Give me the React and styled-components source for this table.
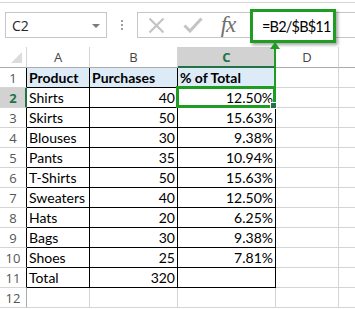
import React from "react";
import styled, { createGlobalStyle } from "styled-components";

const GREEN = "#1f9c22";
const SEL = "#217346";

const Global = createGlobalStyle`
  html, body { margin: 0; padding: 0; background: #fff; }
  body { width: 355px; height: 309px; overflow: hidden; font-family: Lato, "Open Sans", sans-serif; }
`;

const Page = styled.div`
  position: relative;
  width: 355px;
  height: 309px;
  overflow: hidden;
  background: #fff;
`;

const Toolbar = styled.div`
  height: 47px;
  box-sizing: border-box;
  border-top: 1px solid #fff;
  display: flex;
  align-items: flex-start;
  padding: 11px 0 0 5px;
  position: relative;
  &::before {
    content: "";
    position: absolute;
    left: 0; right: 0; top: 1px;
    height: 1px;
    background: #d4d4d4;
  }
`;

const NameBox = styled.div`
  width: 102px;
  height: 26px;
  box-sizing: border-box;
  border: 1px solid #c6c6c6;
  display: flex;
  align-items: center;
  justify-content: space-between;
  padding: 0 6px 0 6px;
  font-family: "Open Sans", "Noto Sans", sans-serif;
  font-size: 14px;
  color: #262626;
`;

const DropArrow = styled.span`
  width: 0; height: 0;
  border-left: 4px solid transparent;
  border-right: 4px solid transparent;
  border-top: 4px solid #7a7a7a;
  margin-top: 1px;
`;

const Dots = styled.div`
  width: 30px;
  height: 26px;
  display: flex;
  flex-direction: column;
  align-items: center;
  justify-content: center;
  gap: 2px;
  & > span { width: 2px; height: 2px; background: #9c9c9c; }
`;

const FormulaBar = styled.div`
  flex: 1;
  height: 26px;
  box-sizing: border-box;
  border: 1px solid #c6c6c6;
  border-right: none;
  display: flex;
  align-items: center;
`;

const IconBtn = styled.div`
  width: ${(p) => p.$w}px;
  height: 24px;
  display: flex;
  align-items: center;
  justify-content: center;
`;

const Fx = styled.span`
  font-family: "Liberation Serif", "DejaVu Serif", serif;
  font-style: italic;
  font-size: 23px;
  color: #6e6e6e;
  line-height: 1;
  letter-spacing: -1px;
  margin-top: -2px;
`;

const FormulaCallout = styled.div`
  position: absolute;
  left: 250px;
  top: 9px;
  width: 86px;
  height: 34px;
  box-sizing: border-box;
  border: 3px solid ${GREEN};
  background: #fff;
  box-shadow: 2px 2px 3px rgba(0, 0, 0, 0.35);
  display: flex;
  align-items: center;
  padding-left: 9px;
  font-family: Lato, "Open Sans", sans-serif;
  font-size: 14.5px;
  letter-spacing: -0.8px;
  color: #000;
  white-space: nowrap;
  z-index: 3;
`;

const Arrow = styled.div`
  position: absolute;
  left: 274px;
  top: 43px;
  width: 2px;
  height: 43px;
  background: ${GREEN};
  z-index: 3;
  &::before {
    content: "";
    position: absolute;
    left: -4px;
    top: -1px;
    border-left: 5px solid transparent;
    border-right: 5px solid transparent;
    border-bottom: 7px solid ${GREEN};
  }
`;

const Grid = styled.div`
  display: grid;
  grid-template-columns: 27px 63px 88px 98px 63px 17px;
  grid-auto-rows: 20px;
  grid-template-rows: 21px;
  font-family: Lato, "Open Sans", sans-serif;
  font-size: 14px;
`;

const Corner = styled.div`
  box-sizing: border-box;
  border-right: 1px solid #d4d4d4;
  border-bottom: 1px solid #ababab;
  position: relative;
  &::after {
    content: "";
    position: absolute;
    right: 4px;
    bottom: 4px;
    border-left: 11px solid transparent;
    border-bottom: 11px solid #dcdcdc;
  }
`;

const ColHead = styled.div`
  box-sizing: border-box;
  border-right: 1px solid ${(p) => (p.$sel ? "#ababab" : "#d4d4d4")};
  border-bottom: ${(p) => (p.$sel ? `2px solid ${SEL}` : "1px solid #ababab")};
  background: ${(p) => (p.$sel ? "#d2d2d2" : "#fff")};
  color: ${(p) => (p.$sel ? SEL : "#444")};
  font-family: "Open Sans", "Noto Sans", sans-serif;
  font-weight: ${(p) => (p.$sel ? 700 : 400)};
  font-size: 13px;
  display: flex;
  align-items: center;
  justify-content: center;
  padding-top: ${(p) => (p.$sel ? 1 : 0)}px;
`;

const RowHead = styled.div`
  box-sizing: border-box;
  border-bottom: 1px solid #d4d4d4;
  border-right: ${(p) =>
    p.$sel ? `2px solid ${SEL}` : p.$edge ? "1px solid #000" : "1px solid #ababab"};
  background: ${(p) => (p.$sel ? "#d2d2d2" : "#fff")};
  color: ${(p) => (p.$sel ? SEL : "#555")};
  font-family: "Open Sans", "Noto Sans", sans-serif;
  font-weight: ${(p) => (p.$sel ? 700 : 400)};
  font-size: 13px;
  display: flex;
  align-items: center;
  justify-content: center;
  padding-left: ${(p) => (p.$sel ? 1 : 0)}px;
`;

const Cell = styled.div`
  box-sizing: border-box;
  position: relative;
  border-right: 1px solid ${(p) => (p.$table ? "#000" : "#d4d4d4")};
  border-bottom: 1px solid ${(p) => (p.$table ? "#000" : "#d4d4d4")};
  background: ${(p) => (p.$head ? "#ddebf7" : "#fff")};
  font-weight: ${(p) => (p.$head ? 700 : 400)};
  color: #000;
  display: flex;
  align-items: center;
  justify-content: ${(p) => (p.$num ? "flex-end" : "flex-start")};
  padding: 1px 2px 0 2px;
  white-space: nowrap;
  line-height: 1;
`;

const Selection = styled.div`
  position: absolute;
  left: -2px;
  top: -2px;
  right: -1px;
  bottom: -1px;
  border: 3px solid ${GREEN};
  pointer-events: none;
  z-index: 2;
  &::after {
    content: "";
    position: absolute;
    right: -4px;
    bottom: -4px;
    width: 5px;
    height: 5px;
    background: ${SEL};
    border: 1px solid #fff;
  }
`;

const rows = [
  ["Product", "Purchases", "% of Total"],
  ["Shirts", "40", "12.50%"],
  ["Skirts", "50", "15.63%"],
  ["Blouses", "30", "9.38%"],
  ["Pants", "35", "10.94%"],
  ["T-Shirts", "50", "15.63%"],
  ["Sweaters", "40", "12.50%"],
  ["Hats", "20", "6.25%"],
  ["Bags", "30", "9.38%"],
  ["Shoes", "25", "7.81%"],
  ["Total", "320", ""],
];

export default function App() {
  return (
    <Page>
      <Global />
      <Toolbar>
        <NameBox>
          <span>C2</span>
          <DropArrow />
        </NameBox>
        <Dots>
          <span />
          <span />
          <span />
        </Dots>
        <FormulaBar>
          <IconBtn $w={37}>
            <svg width="17" height="17" viewBox="0 0 17 17">
              <path d="M1.5 1.5 L15.5 15.5 M15.5 1.5 L1.5 15.5" stroke="#c4c4c4" strokeWidth="2.2" fill="none" />
            </svg>
          </IconBtn>
          <IconBtn $w={36}>
            <svg width="20" height="16" viewBox="0 0 20 16">
              <path d="M1.5 8.5 L7 14 L18.5 1.5" stroke="#c4c4c4" strokeWidth="3" fill="none" />
            </svg>
          </IconBtn>
          <IconBtn $w={34}>
            <Fx>fx</Fx>
          </IconBtn>
        </FormulaBar>
      </Toolbar>
      <FormulaCallout>=B2/$B$11</FormulaCallout>
      <Arrow />
      <Grid>
        <Corner />
        <ColHead>A</ColHead>
        <ColHead>B</ColHead>
        <ColHead $sel>C</ColHead>
        <ColHead>D</ColHead>
        <ColHead />
        {rows.map((r, i) => (
          <React.Fragment key={i}>
            <RowHead $sel={i === 1} $edge>
              {i + 1}
            </RowHead>
            <Cell $table $head={i === 0}>{r[0]}</Cell>
            <Cell $table $head={i === 0} $num={i > 0}>{r[1]}</Cell>
            <Cell $table $head={i === 0} $num={i > 0}>
              {r[2]}
              {i === 1 && <Selection />}
            </Cell>
            <Cell />
            <Cell />
          </React.Fragment>
        ))}
        <RowHead>12</RowHead>
        <Cell />
        <Cell />
        <Cell />
        <Cell />
        <Cell />
      </Grid>
    </Page>
  );
}
